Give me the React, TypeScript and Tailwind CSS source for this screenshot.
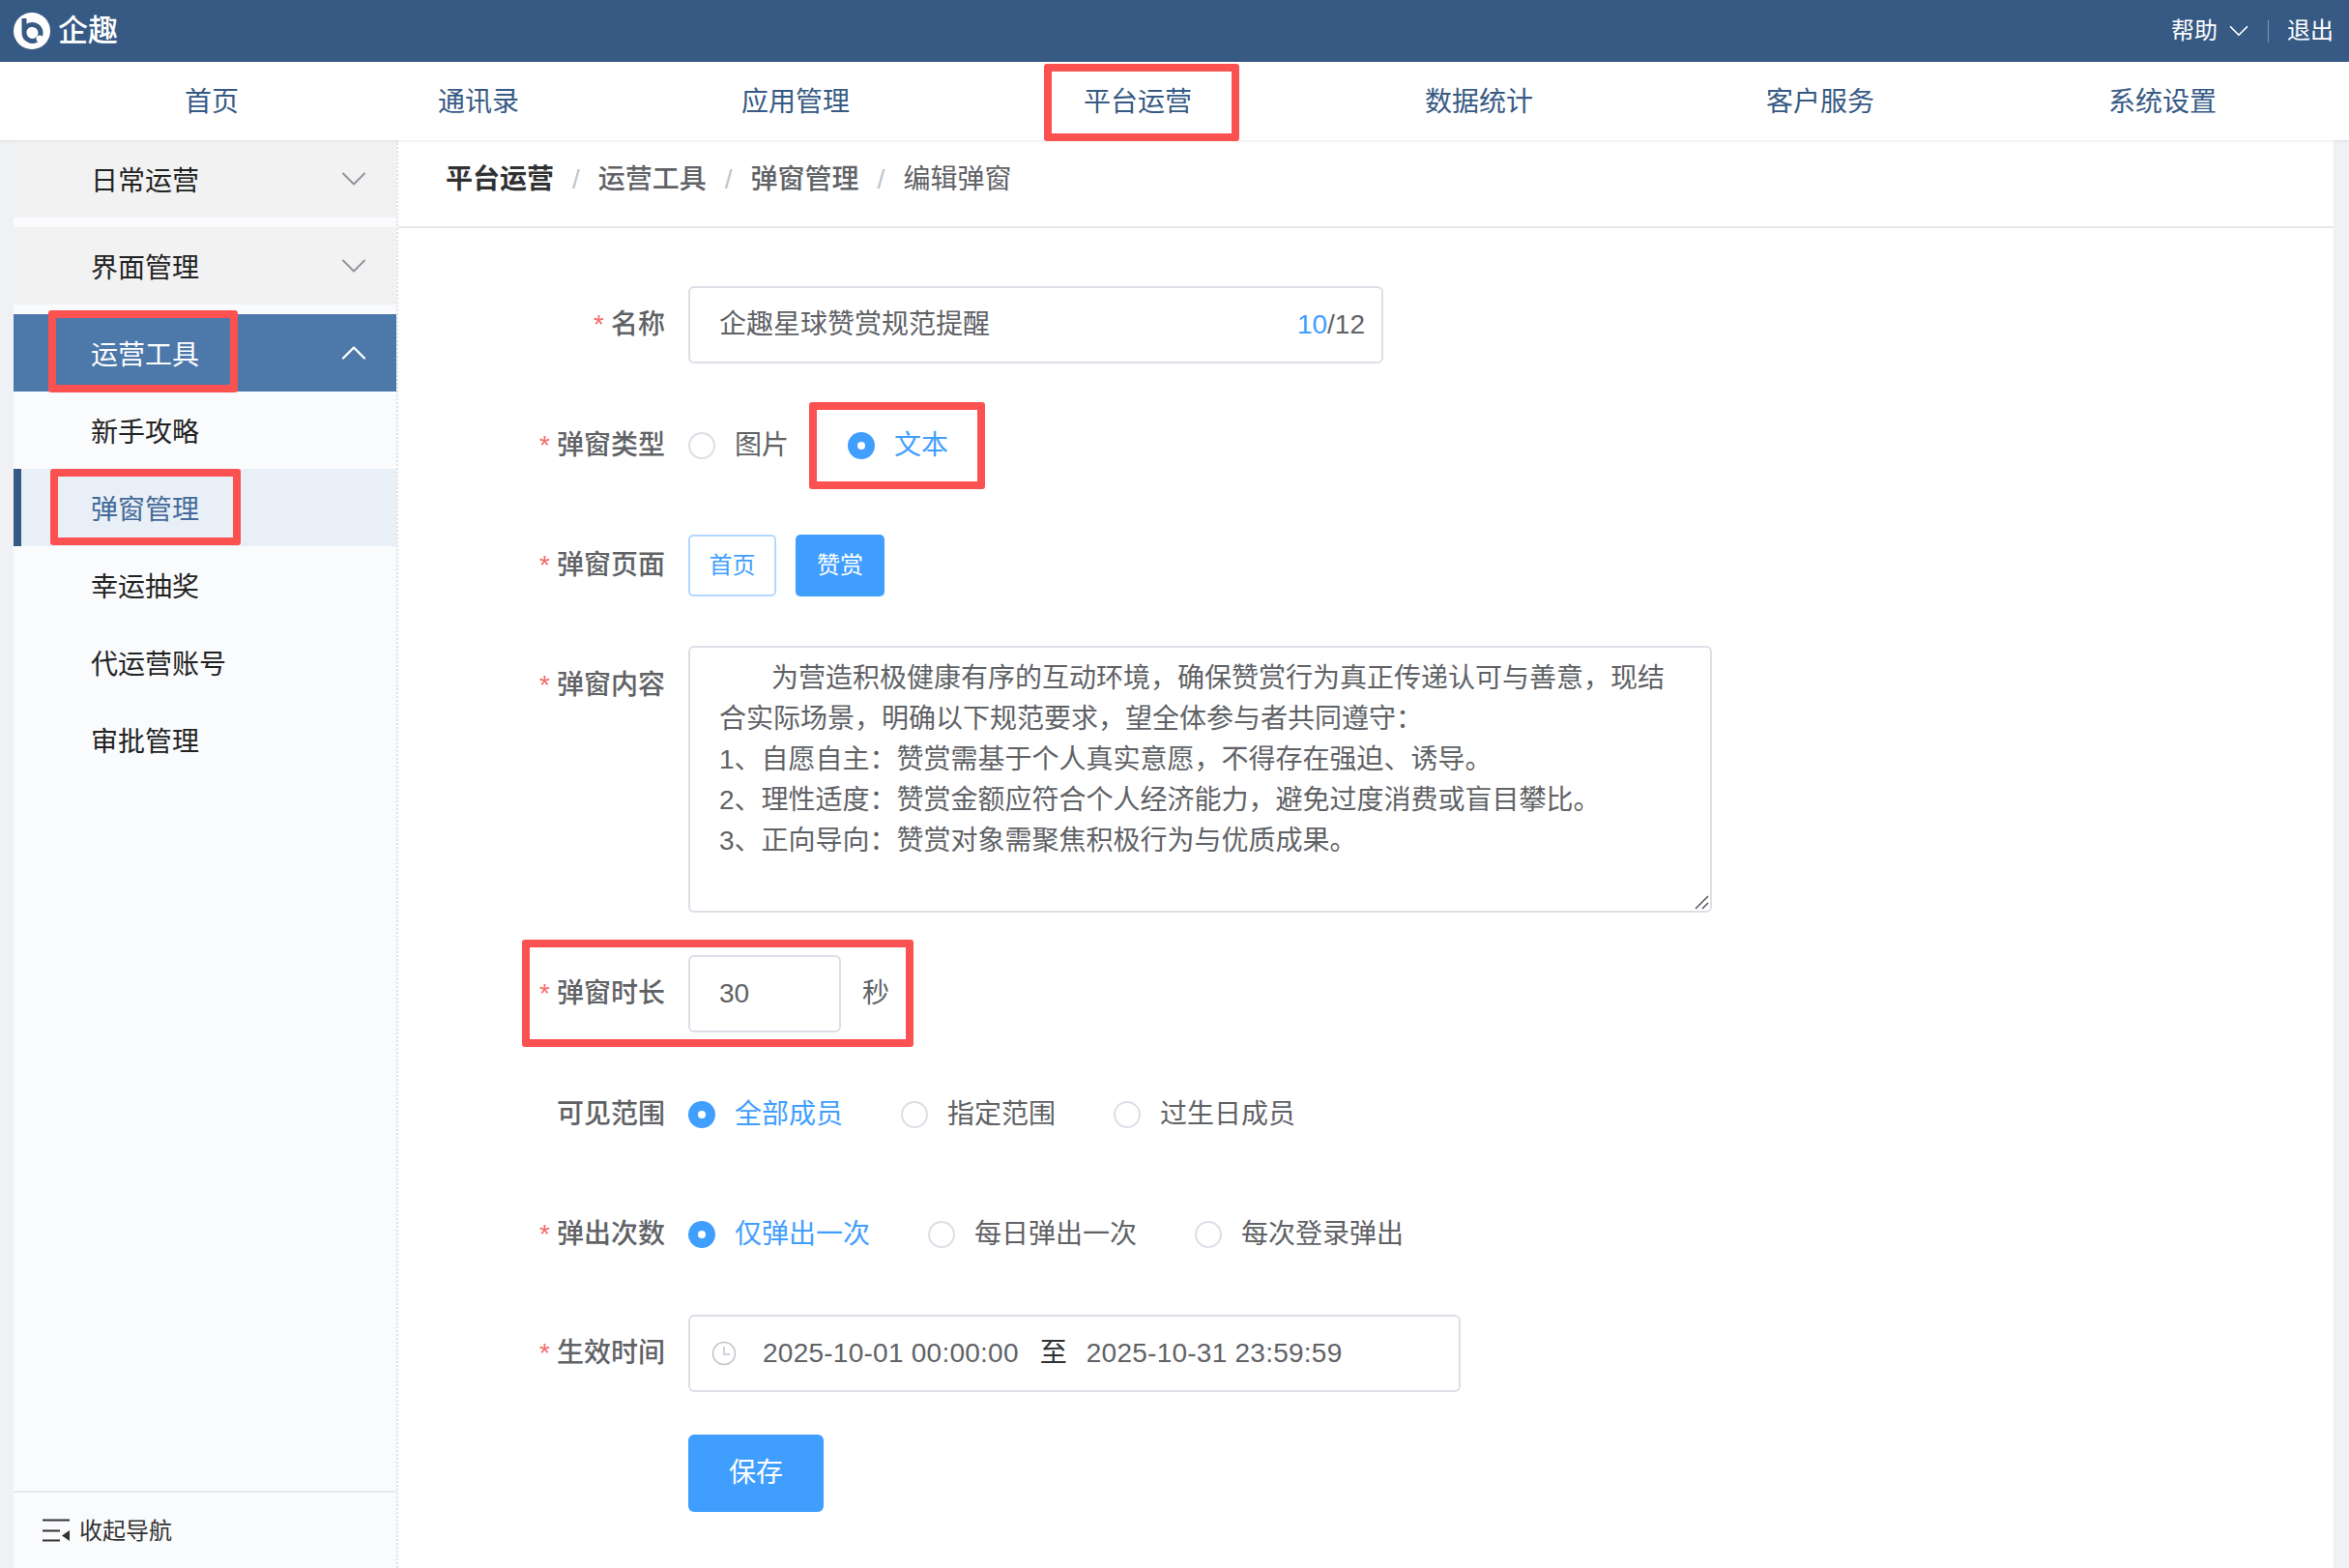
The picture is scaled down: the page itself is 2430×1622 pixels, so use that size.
import { ChevronDown, ChevronUp } from 'lucide-react';
import type { ReactNode } from 'react';

function Mark({ className }: { className: string }) {
    return <div className={`pointer-events-none absolute rounded-[3px] border-[8px] border-[#fc5151] ${className}`} />;
}

function Radio({ label, checked, gap = '' }: { label: string; checked?: boolean; gap?: string }) {
    return (
        <div className={`flex items-center ${gap}`}>
            {checked ? (
                <span className="flex h-[28px] w-[28px] items-center justify-center rounded-full bg-[#409eff]">
                    <span className="h-[8px] w-[8px] rounded-full bg-white" />
                </span>
            ) : (
                <span className="h-[28px] w-[28px] rounded-full border-2 border-[#dcdfe6] bg-white" />
            )}
            <span className={`ml-[20px] ${checked ? 'text-[#409eff]' : 'text-[#606266]'}`}>{label}</span>
        </div>
    );
}

function Row({
    label,
    required = true,
    top,
    alignTop,
    children,
}: {
    label: string;
    required?: boolean;
    top: string;
    alignTop?: boolean;
    children: ReactNode;
}) {
    return (
        <div className={`flex ${alignTop ? 'items-start' : 'items-center'} ${top}`}>
            <div className={`flex w-[276px] shrink-0 justify-end font-medium text-[#606266] ${alignTop ? 'pt-[20px]' : ''}`}>
                {required && <span className="mr-[7px] text-[#f56c6c]">*</span>}
                {label}
            </div>
            <div className="ml-[24px] flex items-center">{children}</div>
        </div>
    );
}

const navItems = [
    { label: '首页', cls: 'ml-[191px]' },
    { label: '通讯录', cls: 'ml-[206px]' },
    { label: '应用管理', cls: 'ml-[230px]' },
    { label: '平台运营', cls: 'ml-[242px]' },
    { label: '数据统计', cls: 'ml-[241px]' },
    { label: '客户服务', cls: 'ml-[241px]' },
    { label: '系统设置', cls: 'ml-[242px]' },
];

const subItems = ['新手攻略', '弹窗管理', '幸运抽奖', '代运营账号', '审批管理'];

const paragraph = [
    '为营造积极健康有序的互动环境，确保赞赏行为真正传递认可与善意，现结合实际场景，明确以下规范要求，望全体参与者共同遵守：',
    '1、自愿自主：赞赏需基于个人真实意愿，不得存在强迫、诱导。',
    '2、理性适度：赞赏金额应符合个人经济能力，避免过度消费或盲目攀比。',
    '3、正向导向：赞赏对象需聚焦积极行为与优质成果。',
];

export default function App() {
    return (
        <div className="flex h-[1622px] w-[2430px] flex-col overflow-hidden bg-[#eff1f4] font-['Liberation_Sans','Noto_Sans_CJK_SC',sans-serif] text-[28px] leading-[42px] text-[#606266]">
            {/* top bar */}
            <header className="flex h-[64px] shrink-0 items-center bg-[#375a84] pl-[14px] pr-[16px] text-white">
                <svg width="38" height="38" viewBox="0 0 38 38">
                    <circle cx="19" cy="19" r="19" fill="#fff" />
                    <path d="M11 6 V21 A8.5 8.5 0 1 0 19 12.5 A8.5 8.5 0 0 0 11 19" fill="none" stroke="#375a84" strokeWidth="5" />
                    <circle cx="27" cy="27" r="3.5" fill="#fff" />
                </svg>
                <span className="ml-[8px] text-[31px] font-medium">企趣</span>
                <div className="ml-auto flex items-center text-[24px]">
                    <span>帮助</span>
                    <ChevronDown size={34} strokeWidth={1.2} className="ml-[5px]" />
                    <span className="ml-[13px] h-[23px] w-[1px] bg-[#7f97b3]" />
                    <span className="ml-[19px]">退出</span>
                </div>
            </header>

            {/* main nav */}
            <nav className="relative z-10 flex h-[81px] shrink-0 items-center bg-white pt-[3px] text-[#375a84] shadow-[0_1px_3px_rgba(0,0,0,0.08)]">
                {navItems.map((item) => (
                    <span key={item.label} className={`relative ${item.cls}`}>
                        {item.label}
                        {item.label === '平台运营' && <Mark className="-left-[41px] -right-[49px] -top-[19px] -bottom-[19px]" />}
                    </span>
                ))}
            </nav>

            <div className="flex min-h-0 flex-1 pl-[14px] pr-[16px]">
                {/* sidebar */}
                <aside className="flex w-[398px] shrink-0 flex-col border-r-2 border-dotted border-[#dfe2e7] bg-[#fafbfd]">
                    <div className="flex-1">
                        {['日常运营', '界面管理'].map((t) => (
                            <div key={t} className="mb-[10px] flex h-[80px] items-center justify-between bg-[#f2f2f3] pl-[80px] pr-[22px] text-[#222]">
                                <span className="pt-[5px]">{t}</span>
                                <ChevronDown size={44} strokeWidth={1.1} className="text-[#8f949c]" />
                            </div>
                        ))}
                        <div className="relative flex h-[80px] items-center justify-between bg-[#4d78aa] pl-[80px] pr-[22px] text-white">
                            <span className="pt-[5px]">运营工具</span>
                            <ChevronUp size={44} strokeWidth={1.3} />
                            <Mark className="left-[36px] top-[-4px] h-[85px] w-[196px]" />
                        </div>
                        {subItems.map((t) =>
                            t === '弹窗管理' ? (
                                <div key={t} className="relative flex h-[80px] items-center border-l-[8px] border-[#375a84] bg-[#e9eff7] pl-[72px] text-[#436a9a]">
                                    <span className="pt-[5px]">{t}</span>
                                    <Mark className="left-[30px] top-0 h-[79px] w-[197px]" />
                                </div>
                            ) : (
                                <div key={t} className="flex h-[80px] items-center pl-[80px] text-[#222]">
                                    <span className="pt-[5px]">{t}</span>
                                </div>
                            ),
                        )}
                    </div>
                    <div className="flex h-[80px] shrink-0 items-center border-t-2 border-[#e6e8eb] pl-[30px] text-[24px] text-[#333]">
                        <svg width="28" height="24" viewBox="0 0 28 24" fill="#333">
                            <rect x="0" y="0.5" width="28" height="2" />
                            <rect x="0" y="11.5" width="18" height="2" />
                            <rect x="0" y="21.5" width="18" height="2" />
                            <path d="M28 12 V23 L20 17.5 Z" />
                        </svg>
                        <span className="ml-[10px] pt-[2px]">收起导航</span>
                    </div>
                </aside>

                {/* content */}
                <main className="flex-1 bg-white">
                    <div className="flex h-[91px] items-center border-b-2 border-[#e6e8eb] pb-[8px] pl-[49px]">
                        <span className="font-bold text-[#303133]">平台运营</span>
                        <span className="mx-[19px] text-[#c0c4cc]">/</span>
                        <span className="font-medium text-[#606266]">运营工具</span>
                        <span className="mx-[19px] text-[#c0c4cc]">/</span>
                        <span className="font-medium text-[#606266]">弹窗管理</span>
                        <span className="mx-[19px] text-[#c0c4cc]">/</span>
                        <span>编辑弹窗</span>
                    </div>

                    <Row label="名称" top="mt-[60px]">
                        <div className="flex h-[80px] w-[719px] items-center justify-between rounded-[6px] border-2 border-[#dcdfe6] pl-[30px] pr-[17px]">
                            企趣星球赞赏规范提醒
                            <span>
                                <span className="text-[#409eff]">10</span>/12
                            </span>
                        </div>
                    </Row>

                    <Row label="弹窗类型" top="mt-[45px]">
                        <div className="flex h-[80px] items-center">
                            <Radio label="图片" />
                            <div className="relative ml-[61px]">
                                <Radio label="文本" checked />
                                <Mark className="-left-[40px] -right-[38px] -top-[24px] -bottom-[24px]" />
                            </div>
                        </div>
                    </Row>

                    <Row label="弹窗页面" top="mt-[52px]">
                        <div className="flex items-center text-[24px]">
                            <span className="flex h-[64px] w-[91px] items-center justify-center rounded-[5px] border-2 border-[#b3d8ff] text-[#409eff]">首页</span>
                            <span className="ml-[20px] flex h-[64px] w-[92px] items-center justify-center rounded-[5px] bg-[#409eff] text-white">赞赏</span>
                        </div>
                    </Row>

                    <Row label="弹窗内容" top="mt-[51px]" alignTop>
                        <div className="relative h-[276px] w-[1059px] rounded-[6px] border-2 border-[#dcdfe6] px-[30px] py-[11px]">
                            <p className="indent-[54px]">{paragraph[0]}</p>
                            {paragraph.slice(1).map((line) => (
                                <p key={line}>{line}</p>
                            ))}
                            <svg className="absolute bottom-[1px] right-[1px]" width="16" height="16" viewBox="0 0 16 16" stroke="#555" strokeWidth="1.5">
                                <path d="M2 15 L15 2 M9 15 L15 9" />
                            </svg>
                        </div>
                    </Row>

                    <Row label="弹窗时长" top="mt-[44px]">
                        <div className="relative flex items-center">
                            <div className="flex h-[80px] w-[158px] items-center rounded-[6px] border-2 border-[#dcdfe6] pl-[30px]">30</div>
                            <span className="ml-[22px]">秒</span>
                            <Mark className="-left-[172px] -right-[25px] -top-[16px] -bottom-[15px]" />
                        </div>
                    </Row>

                    <Row label="可见范围" required={false} top="mt-[45px]">
                        <div className="flex h-[80px] items-center">
                            <Radio label="全部成员" checked />
                            <Radio label="指定范围" gap="ml-[60px]" />
                            <Radio label="过生日成员" gap="ml-[60px]" />
                        </div>
                    </Row>

                    <Row label="弹出次数" top="mt-[44px]">
                        <div className="flex h-[80px] items-center">
                            <Radio label="仅弹出一次" checked />
                            <Radio label="每日弹出一次" gap="ml-[60px]" />
                            <Radio label="每次登录弹出" gap="ml-[60px]" />
                        </div>
                    </Row>

                    <Row label="生效时间" top="mt-[43px]">
                        <div className="flex h-[80px] w-[799px] items-center rounded-[6px] border-2 border-[#dcdfe6] pl-[22px]">
                            <svg width="26" height="26" viewBox="0 0 26 26" fill="none" stroke="#c0c4cc" strokeWidth="1.5">
                                <circle cx="13" cy="13" r="11.5" />
                                <path d="M13 6 V14 H19" />
                            </svg>
                            <span className="ml-[27px] tracking-[0.25px]">2025-10-01 00:00:00</span>
                            <span className="ml-[22px] text-[#303133]">至</span>
                            <span className="ml-[20px] tracking-[0.25px]">2025-10-31 23:59:59</span>
                        </div>
                    </Row>

                    <div className="ml-[300px] mt-[44px] flex h-[80px] w-[140px] items-center justify-center rounded-[6px] bg-[#409eff] text-white">保存</div>
                </main>
            </div>
        </div>
    );
}
